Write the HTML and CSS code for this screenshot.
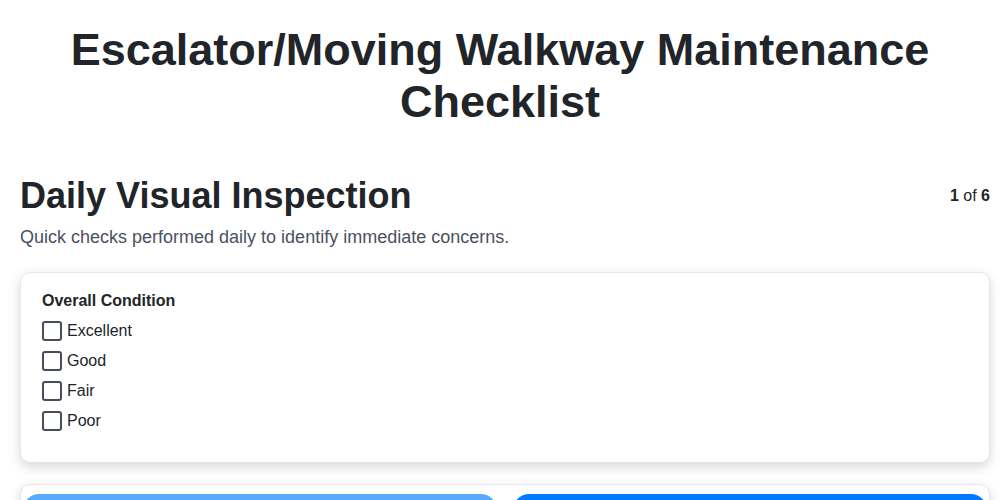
FILE: index.html
```html
<!DOCTYPE html>
<html lang="en">
<head>
    <meta charset="utf-8">
    <meta name="viewport" content="width=device-width, initial-scale=1.0">
    <title>Escalator/Moving Walkway Maintenance Checklist</title>
    <link rel="stylesheet" href="styles.css">
</head>
<body>
<h1 class="titel">Escalator/Moving Walkway Maintenance Checklist</h1>

<main class="wizard">
    <div class="step-head">
        <h2>Daily Visual Inspection</h2>
        <div class="step-count"><b>1</b> of <b>6</b></div>
    </div>
    <p class="step-desc">Quick checks performed daily to identify immediate concerns.</p>

    <section class="card">
        <div class="felt-navn">Overall Condition</div>
        <label class="valg"><input type="checkbox" name="condition" value="excellent"> Excellent</label>
        <label class="valg"><input type="checkbox" name="condition" value="good"> Good</label>
        <label class="valg"><input type="checkbox" name="condition" value="fair"> Fair</label>
        <label class="valg"><input type="checkbox" name="condition" value="poor"> Poor</label>
    </section>

    <nav class="card knapper">
        <button class="knap forrige" disabled>Previous</button>
        <button class="knap naeste">Next</button>
    </nav>
</main>
</body>
</html>
```

FILE: styles.css
```css
body {
    margin: 0;
    background: #fff;
    color: #212529;
    font-family: "Liberation Sans", Arial, sans-serif;
}
.titel {
    margin: 24px 0 0;
    text-align: center;
    font-size: 45px;
    line-height: 52px;
}
.wizard {
    margin: 46px 10px 0 20px;
}
.step-head {
    display: flex;
    justify-content: space-between;
    align-items: center;
}
.step-head h2 {
    margin: 0;
    font-size: 36px;
    line-height: 1.2;
}
.step-count {
    font-size: 16px;
}
.step-desc {
    margin: 7px 0 21px;
    font-size: 18px;
    line-height: 27px;
    color: #4a5160;
}
.card {
    background: #fff;
    border: 1px solid #e6e6ec;
    border-radius: 10px;
    box-shadow: 0 4px 12px rgba(0, 0, 0, .16);
    padding: 19px 20px 26px 21px;
}
.felt-navn {
    font-weight: bold;
    font-size: 16px;
    line-height: 18px;
    margin-bottom: 6px;
}
.valg {
    display: flex;
    align-items: center;
    gap: 5px;
    height: 30px;
    font-size: 16px;
}
.valg input {
    appearance: none;
    margin: 0;
    width: 20px;
    height: 20px;
    border: 2px solid #474c5b;
    border-radius: 3px;
    background: #fff;
}
.knapper {
    margin-top: 21px;
    display: flex;
    gap: 16px;
    padding: 9px 2px;
}
.knap {
    flex: 1;
    height: 48px;
    border: none;
    border-radius: 16px;
    background: #007bff;
    color: #fff;
    font-size: 16px;
    font-family: inherit;
}
.knap:disabled {
    opacity: .65;
}
```
